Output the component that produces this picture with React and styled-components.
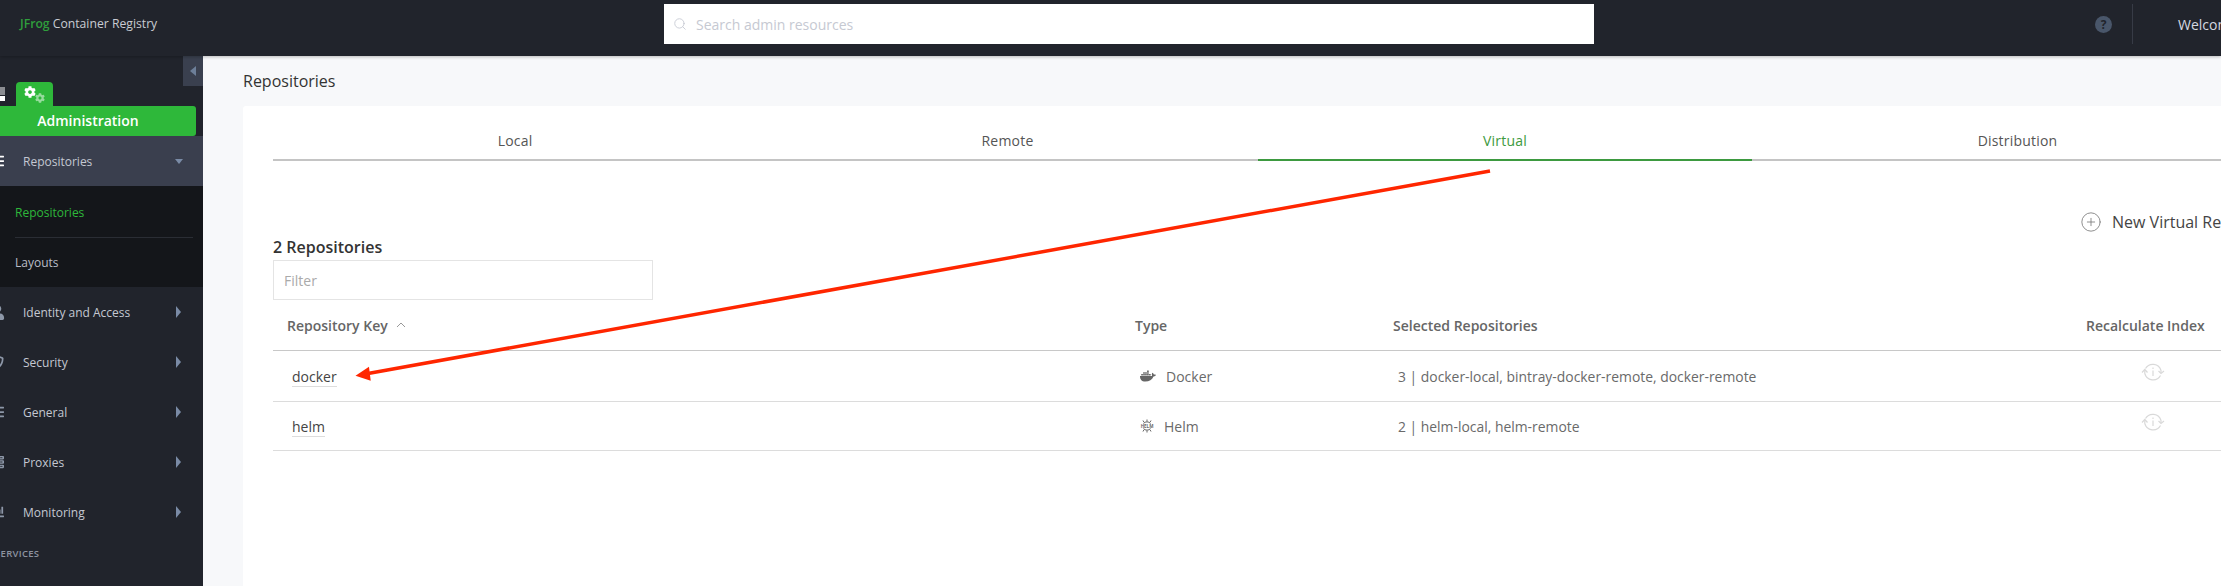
import styled, { createGlobalStyle } from 'styled-components';
import { FaDocker, FaCog, FaUser, FaShieldAlt, FaServer, FaList, FaChartBar } from 'react-icons/fa';
import { Search, CirclePlus } from 'lucide-react';

// Page defaults

const GlobalStyle = createGlobalStyle`
  html, body {
    margin: 0;
    padding: 0;
    overflow: hidden;
    background: #f7f8fa;
    font-family: "Open Sans", "Liberation Sans", sans-serif;
  }
`;

const Page = styled.div`
  position: relative;
  width: 2221px;
  height: 586px;
  overflow: hidden;
  display: flex;
  flex-direction: column;
`;

// Top bar

const Header = styled.header`
  flex: 0 0 56px;
  display: flex;
  align-items: center;
  background: #21242c;
  box-shadow: 0 1px 3px rgba(0, 0, 0, 0.25);
  position: relative;
  z-index: 2;
  > * {
    flex-shrink: 0;
  }
`;

const Logo = styled.div`
  width: 644px;
  padding-left: 20px;
  box-sizing: border-box;
  margin-top: -9px;
  font-size: 12.2px;
  color: #c9ccd3;
  white-space: nowrap;
  span {
    color: #2f9e3c;
    font-weight: 600;
  }
`;

const SearchBox = styled.div`
  width: 930px;
  height: 40px;
  margin-top: -8px;
  margin-left: 20px;
  display: flex;
  align-items: center;
  gap: 9px;
  padding-left: 9px;
  box-sizing: border-box;
  background: #fff;
  font-size: 14px;
  color: #c6c9d2;
  svg {
    color: #c6c9d2;
  }
`;

const HelpDot = styled.div`
  width: 17px;
  height: 17px;
  margin-left: 501px;
  margin-top: -8px;
  border-radius: 50%;
  background: #49566a;
  color: #21242c;
  font-size: 12px;
  font-weight: 700;
  display: flex;
  align-items: center;
  justify-content: center;
`;

const HeaderDivider = styled.div`
  width: 1px;
  height: 40px;
  margin-left: 20px;
  margin-top: -8px;
  background: #373b46;
`;

const Welcome = styled.div`
  margin-left: 45px;
  margin-top: -8px;
  font-size: 14px;
  color: #d5d8e0;
  white-space: nowrap;
`;

// Sidebar

const Body = styled.div`
  flex: 1;
  display: flex;
  min-height: 0;
`;

const Sidebar = styled.aside`
  position: relative;
  flex: 0 0 203px;
  overflow: hidden;
  background: #21242c;
`;

const SidebarInner = styled.div`
  width: 223px;
  margin-left: -20px;
`;

const CollapseButton = styled.div`
  position: absolute;
  top: 0;
  right: 0;
  width: 20px;
  height: 30px;
  background: #3a404f;
  display: flex;
  align-items: center;
  justify-content: center;
  &::before {
    content: '';
    border-style: solid;
    border-width: 5px 6px 5px 0;
    border-color: transparent #6d7f99 transparent transparent;
  }
`;

const ModuleRow = styled.div`
  height: 24px;
  padding-top: 26px;
  padding-left: 10px;
  display: flex;
  align-items: flex-end;
  gap: 11px;
`;

const AppGrid = styled.div`
  width: 15px;
  height: 14px;
  margin-bottom: 5px;
  background: linear-gradient(#8b8d92 0 8px, #21242c 8px 9px, #fff 9px);
`;

const ModuleTab = styled.div`
  position: relative;
  width: 37px;
  height: 24px;
  border-radius: 4px 4px 0 0;
  background: #2eb83a;
  color: #fff;
`;

const GearBig = styled(FaCog)`
  position: absolute;
  left: 8px;
  top: 4px;
  font-size: 12px;
`;

const GearSmall = styled(FaCog)`
  position: absolute;
  left: 19px;
  top: 11px;
  font-size: 10px;
  opacity: 0.5;
`;

const ModuleTitle = styled.div`
  width: 216px;
  height: 30px;
  border-radius: 0 3px 3px 0;
  background: #2eb83a;
  color: #fff;
  font-size: 14px;
  font-weight: 600;
  line-height: 30px;
  text-align: center;
`;

const NavItem = styled.div`
  height: 50px;
  display: flex;
  align-items: center;
  background: ${(p) => (p.$open ? '#3a3f4e' : 'transparent')};
  font-size: 12px;
  color: #c4c8d2;
`;

const NavIcon = styled.div`
  width: 43px;
  padding-left: 10px;
  box-sizing: border-box;
  display: flex;
  color: ${(p) => (p.$open ? '#fff' : '#8d97a8')};
`;

const NavLabel = styled.div`
  flex: 1;
`;

const Caret = styled.div`
  margin-right: ${(p) => (p.$open ? '20px' : '22px')};
  border-style: solid;
  border-color: transparent;
  border-width: ${(p) => (p.$open ? '5px 4.5px 0 4.5px' : '6px 0 6px 5px')};
  ${(p) =>
    p.$open ? 'border-top-color: #7a8ba6;' : 'border-left-color: #7a8ba6;'}
`;

const SubPanel = styled.div`
  height: 101px;
  background: #14161a;
  padding-left: 35px;
  padding-right: 10px;
`;

const SubItem = styled.div`
  height: ${(p) => (p.$active ? '50px' : '49px')};
  display: flex;
  align-items: center;
  font-size: 12px;
  color: ${(p) => (p.$active ? '#2eb83a' : '#b9bdc7')};
  border-bottom: ${(p) => (p.$active ? '1px solid #2a2d34' : 'none')};
  padding-top: ${(p) => (p.$active ? '1px' : '0')};
`;

const ServicesLabel = styled.div`
  margin-top: 10px;
  padding-left: 15px;
  font-size: 9.5px;
  font-weight: 600;
  color: #8d93a0;
  letter-spacing: 0.3px;
`;

// Main content

const Main = styled.main`
  flex: 1;
  min-width: 0;
  overflow: hidden;
  padding-left: 40px;
`;

const PageTitle = styled.h1`
  height: 50px;
  margin: 0;
  display: flex;
  align-items: center;
  font-size: 16px;
  font-weight: 400;
  color: #333;
`;

const Card = styled.section`
  width: 2040px;
  height: 480px;
  border-radius: 3px 0 0 0;
  background: #fff;
  padding-left: 30px;
`;

const Tabs = styled.div`
  display: grid;
  grid-template-columns: 484px 501px 494px 531px;
  border-bottom: 2px solid #c4c4c4;
  height: 53px;
`;

const Tab = styled.div`
  display: flex;
  align-items: center;
  justify-content: center;
  height: 55px;
  padding-top: 16px;
  box-sizing: border-box;
  font-size: 14px;
  font-weight: 500;
  letter-spacing: 0.2px;
  color: ${(p) => (p.$active ? '#3d9a40' : '#555')};
  border-bottom: 2px solid ${(p) => (p.$active ? '#3d9a40' : 'transparent')};
`;

const Toolbar = styled.div`
  height: 139px;
  display: flex;
`;

const FilterGroup = styled.div`
  align-self: flex-end;
`;

const CountTitle = styled.div`
  font-size: 16px;
  font-weight: 600;
  line-height: 22px;
  margin-bottom: 2px;
  color: #333;
`;

const FilterBox = styled.div`
  width: 380px;
  height: 40px;
  box-sizing: border-box;
  border: 1px solid #e4e4e4;
  padding-left: 10px;
  display: flex;
  align-items: center;
  font-size: 14px;
  color: #aaa;
`;

const NewButton = styled.div`
  margin-top: 50px;
  margin-left: 1427px;
  height: 22px;
  display: flex;
  align-items: center;
  gap: 10px;
  font-size: 16px;
  color: #444;
  white-space: nowrap;
  svg {
    color: #777;
  }
`;

const Row = styled.div`
  display: grid;
  grid-template-columns: 862px 258px 693px 1fr;
  align-items: center;
  box-sizing: border-box;
  height: ${(p) => p.$height}px;
  border-bottom: ${(p) => (p.$head ? '1px solid #c8c8c8' : '1px solid #dcdcdc')};
`;

const HeadCell = styled.div`
  padding-left: ${(p) => p.$pad || 0}px;
  display: flex;
  align-items: center;
  gap: 8px;
  font-size: 14px;
  font-weight: 600;
  color: #666;
  white-space: nowrap;
`;

const KeyCell = styled.div`
  padding-left: 19px;
  font-size: 14px;
  color: #444;
  span {
    border-bottom: 1px solid #ddd;
  }
`;

const TypeCell = styled.div`
  padding-left: 5px;
  display: flex;
  align-items: center;
  gap: ${(p) => p.$gap}px;
  font-size: 14px;
  color: #6a6a6a;
  svg {
    color: #666;
  }
`;

const SelectedCell = styled.div`
  padding-left: 5px;
  font-size: 13.9px;
  color: #6a6a6a;
  white-space: nowrap;
`;

const RecalcCell = styled.div`
  padding-left: 55px;
  margin-top: -8px;
  display: flex;
`;

const ArrowOverlay = styled.svg`
  position: absolute;
  left: 0;
  top: 0;
  z-index: 3;
  pointer-events: none;
`;

function RecalcIcon() {
  return (
    <svg width="24" height="20" viewBox="0 0 24 20" fill="none" stroke="#d9d9d9" strokeWidth="1.200">
      <path d="M4.500 6.500A8.500 8.500 0 0 1 20 8.500V11" />
      <path d="M19.500 13.500A8.500 8.500 0 0 1 3.800 11.500V8" />
      <path d="M1 10.500L3.800 7.500L6.500 10.500" />
      <path d="M17.500 9L20 11.500L23 9" />
      <path d="M12 8.500v5.500M12 5.500v1.500" />
    </svg>
  );
}

function HelmIcon() {
  return (
    <svg width="14" height="14" viewBox="0 0 14 14" fill="none" stroke="#666" strokeWidth="1">
      <path d="M3.500 4.500A4.500 4.500 0 0 1 10.500 4.500M3.500 9.500A4.500 4.500 0 0 0 10.500 9.500" />
      <path d="M7 0.500v2M3 1.500l1 1.800M11 1.500l-1 1.800M7 13.500v-2M3 12.500l1-1.800M11 12.500l-1-1.800" />
      <text x="7" y="8.800" textAnchor="middle" fontSize="4.500" fontWeight="700" fill="#666" stroke="none">
        HELM
      </text>
    </svg>
  );
}

const repos = [
  {
    key: 'docker',
    type: 'Docker',
    icon: <FaDocker size={16} />,
    gap: 10,
    selected: '3 | docker-local, bintray-docker-remote, docker-remote',
    height: 51,
  },
  {
    key: 'helm',
    type: 'Helm',
    icon: <HelmIcon />,
    gap: 10,
    selected: '2 | helm-local, helm-remote',
    height: 49,
  },
];

const navItems = [
  { label: 'Identity and Access', icon: <FaUser size={15} /> },
  { label: 'Security', icon: <FaShieldAlt size={14} /> },
  { label: 'General', icon: <FaList size={14} /> },
  { label: 'Proxies', icon: <FaServer size={14} /> },
  { label: 'Monitoring', icon: <FaChartBar size={14} /> },
];

export default function App() {
  return (
    <Page>
      <GlobalStyle />
      <Header>
        <Logo>
          <span>JFrog</span> Container Registry
        </Logo>
        <SearchBox>
          <Search size={14} strokeWidth={1.500} />
          Search admin resources
        </SearchBox>
        <HelpDot>?</HelpDot>
        <HeaderDivider />
        <Welcome>Welcome, admin</Welcome>
      </Header>
      <Body>
        <Sidebar>
          <CollapseButton />
          <SidebarInner>
            <ModuleRow>
              <AppGrid />
              <ModuleTab>
                <GearBig />
                <GearSmall />
              </ModuleTab>
            </ModuleRow>
            <ModuleTitle>Administration</ModuleTitle>
            <NavItem $open>
              <NavIcon $open>
                <FaList size={14} />
              </NavIcon>
              <NavLabel>Repositories</NavLabel>
              <Caret $open />
            </NavItem>
            <SubPanel>
              <SubItem $active>Repositories</SubItem>
              <SubItem>Layouts</SubItem>
            </SubPanel>
            {navItems.map((item) => (
              <NavItem key={item.label}>
                <NavIcon>{item.icon}</NavIcon>
                <NavLabel>{item.label}</NavLabel>
                <Caret />
              </NavItem>
            ))}
            <ServicesLabel>SERVICES</ServicesLabel>
          </SidebarInner>
        </Sidebar>
        <Main>
          <PageTitle>Repositories</PageTitle>
          <Card>
            <Tabs>
              <Tab>Local</Tab>
              <Tab>Remote</Tab>
              <Tab $active>Virtual</Tab>
              <Tab>Distribution</Tab>
            </Tabs>
            <Toolbar>
              <FilterGroup>
                <CountTitle>2 Repositories</CountTitle>
                <FilterBox>Filter</FilterBox>
              </FilterGroup>
              <NewButton>
                <CirclePlus size={22} strokeWidth={0.900} />
                New Virtual Repository
              </NewButton>
            </Toolbar>
            <Row $head $height={51}>
              <HeadCell $pad={14}>
                Repository Key
                <svg width="10" height="6" viewBox="0 0 10 6" fill="none" stroke="#999">
                  <path d="M1 5l4-4 4 4" />
                </svg>
              </HeadCell>
              <HeadCell>Type</HeadCell>
              <HeadCell>Selected Repositories</HeadCell>
              <HeadCell>Recalculate Index</HeadCell>
            </Row>
            {repos.map((repo) => (
              <Row key={repo.key} $height={repo.height}>
                <KeyCell>
                  <span>{repo.key}</span>
                </KeyCell>
                <TypeCell $gap={repo.gap}>
                  {repo.icon}
                  {repo.type}
                </TypeCell>
                <SelectedCell>{repo.selected}</SelectedCell>
                <RecalcCell>
                  <RecalcIcon />
                </RecalcCell>
              </Row>
            ))}
          </Card>
        </Main>
      </Body>
      <ArrowOverlay width="2221" height="586" viewBox="0 0 2221 586">
        <line x1="1490" y1="171" x2="368" y2="373.500" stroke="#ff2600" strokeWidth="3.500" />
        <polygon points="355.500,375.700 369,366.700 370.700,380.700" fill="#ff2600" />
      </ArrowOverlay>
    </Page>
  );
}
